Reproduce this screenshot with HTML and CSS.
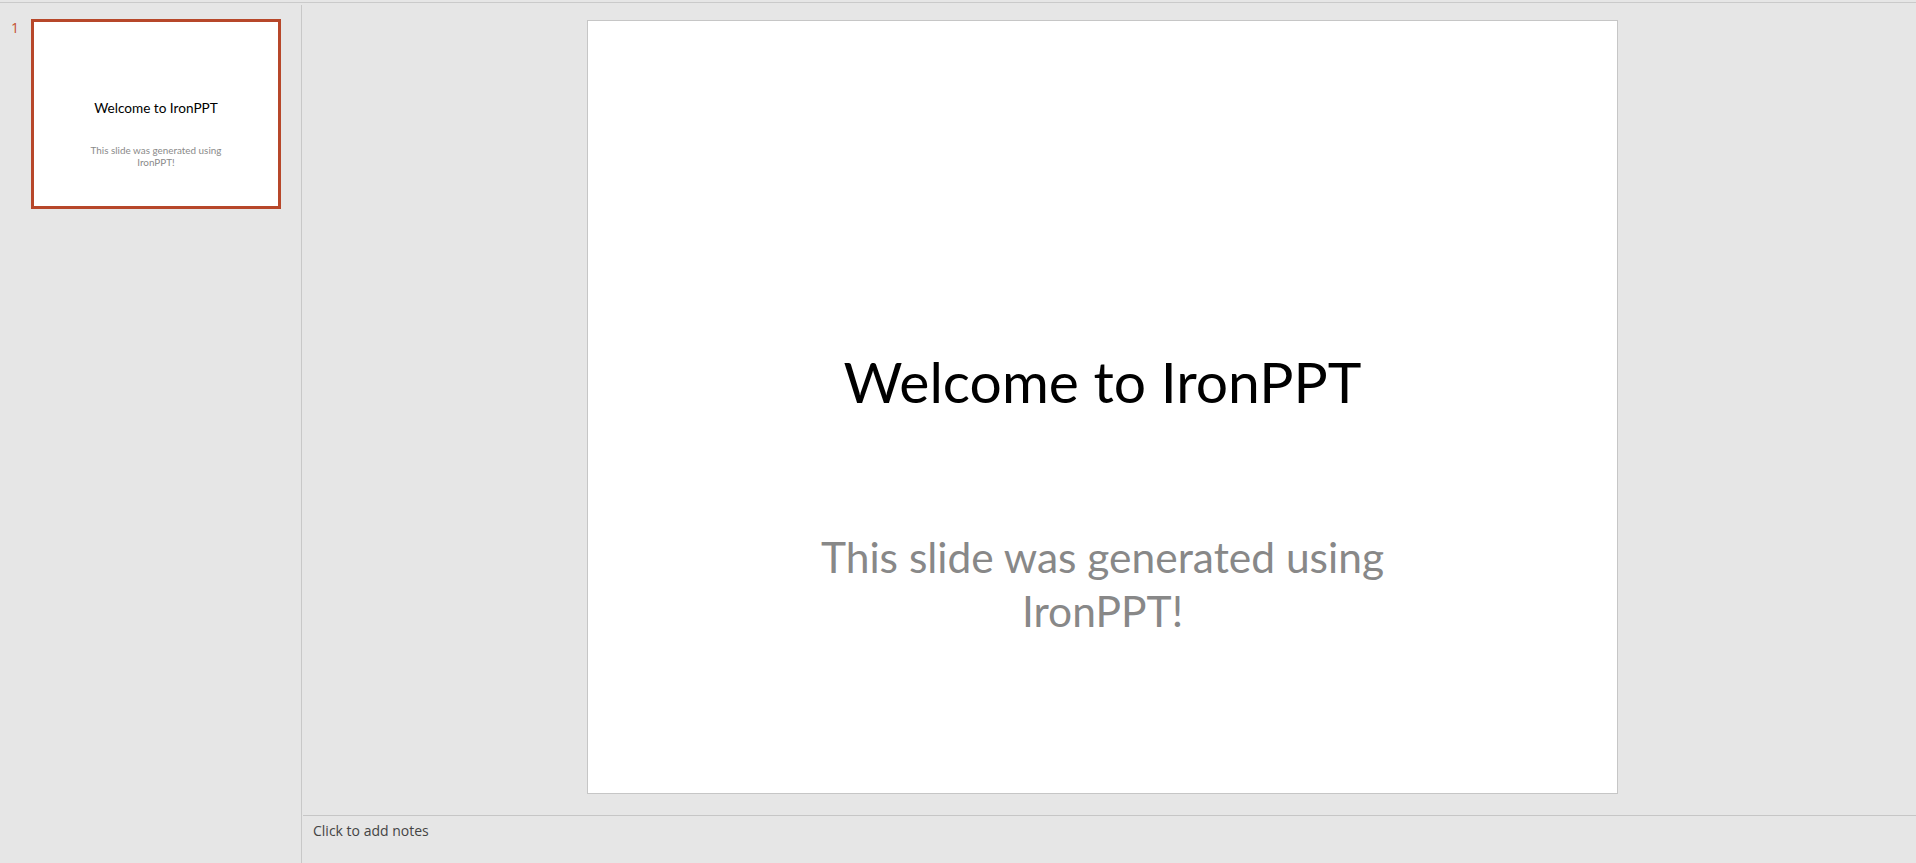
FILE: index.html
```html
<!DOCTYPE html>
<html lang="en">
<head>
<meta charset="utf-8">
<title>IronPPT</title>
<link rel="stylesheet" href="styles.css">
</head>
<body>
<div class="app">
  <div class="workspace">
    <aside class="thumbs">
      <div class="thumb-row">
        <span class="num">1</span>
        <div class="thumb selected">
          <div class="thumb-title">Welcome to IronPPT</div>
          <div class="thumb-sub">This slide was generated using<br>IronPPT!</div>
        </div>
      </div>
    </aside>
    <main class="editor">
      <div class="stage">
        <div class="slide">
          <div class="slide-title">Welcome to IronPPT</div>
          <div class="slide-sub">This slide was generated using<br>IronPPT!</div>
        </div>
      </div>
      <div class="notes">Click to add notes</div>
    </main>
  </div>
</div>
</body>
</html>
```
FILE: styles.css
```css
html, body {
  margin: 0;
  padding: 0;
  height: 100%;
}
body {
  background: #e6e6e6;
  font-family: "Open Sans", "Noto Sans", sans-serif;
  overflow: hidden;
}
.app {
  padding-top: 2px;
  height: 861px;
}
.workspace {
  border-top: 1px solid #cacaca;
  display: flex;
  height: 860px;
}
.thumbs {
  width: 302px;
  margin-top: 2px;
  border-right: 1px solid #c8c8c8;
  box-sizing: border-box;
  flex: none;
}
.thumb-row {
  display: flex;
  align-items: flex-start;
  padding-top: 14px;
  padding-left: 11px;
}
.num {
  font-size: 14px;
  line-height: 16px;
  color: #c4502f;
  width: 20px;
  padding-top: 1px;
}
.thumb {
  width: 244px;
  height: 184px;
  background: #fff;
  border: 3px solid #b7472a;
  display: flex;
  flex-direction: column;
  align-items: center;
  font-family: "Lato", "Open Sans", sans-serif;
}
.thumb-title {
  margin-top: 78px;
  font-size: 13.6px;
  line-height: 16px;
  color: #000;
  white-space: nowrap;
}
.thumb-sub {
  margin-top: 28px;
  font-size: 9.9px;
  line-height: 12px;
  color: #8a8a8a;
  text-align: center;
  white-space: nowrap;
}
.editor {
  flex: 1;
  display: flex;
  flex-direction: column;
}
.stage {
  height: 812px;
  box-sizing: border-box;
  padding-top: 17px;
  padding-left: 285px;
}
.slide {
  width: 1029px;
  height: 772px;
  background: #fff;
  border: 1px solid #c6c6c6;
  display: flex;
  flex-direction: column;
  align-items: center;
  font-family: "Lato", "Open Sans", sans-serif;
}
.slide-title {
  margin-top: 326px;
  font-size: 57px;
  line-height: 68px;
  color: #000;
  white-space: nowrap;
}
.slide-sub {
  margin-top: 115px;
  font-size: 42.5px;
  line-height: 54px;
  color: #888888;
  text-align: center;
  white-space: nowrap;
}
.notes {
  border-top: 1px solid #c6c6c6;
  margin-left: 1px;
  padding: 5px 0 0 10px;
  font-size: 14px;
  line-height: 20px;
  color: #444;
}
```
